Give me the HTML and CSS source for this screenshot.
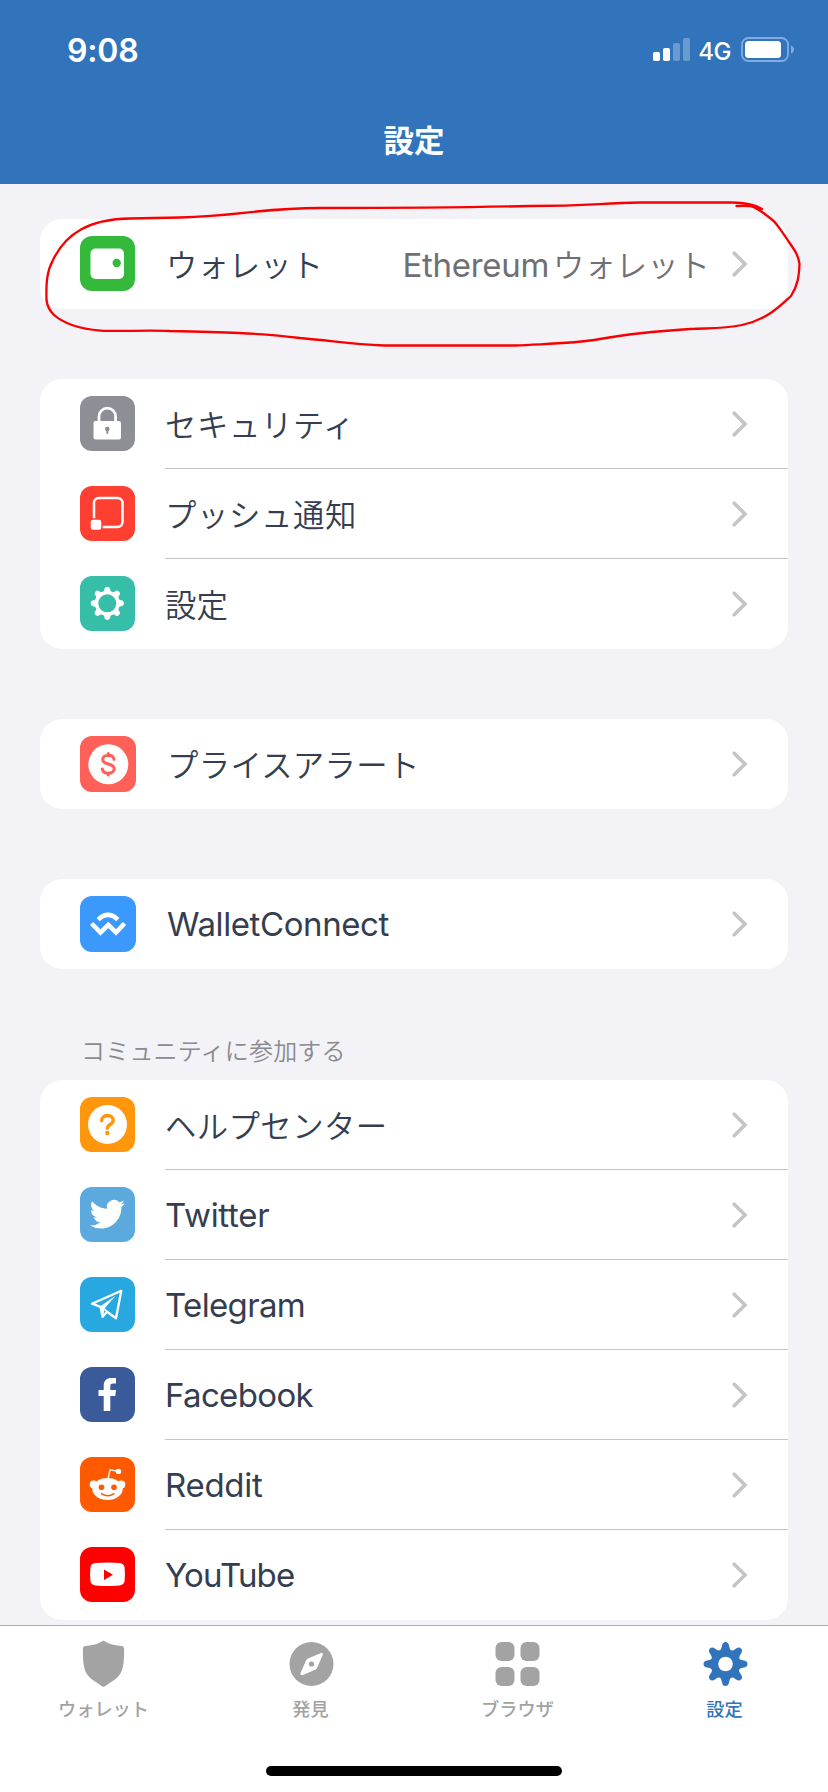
FILE: index.html
```html
<!DOCTYPE html>
<html lang="ja">
<head>
<meta charset="utf-8">
<title>設定</title>
<link rel="stylesheet" href="styles.css">
</head>
<body>
<svg class="defs" width="0" height="0" aria-hidden="true">
  <symbol id="chevron" viewBox="0 0 16 26"><path d="M2.2 2.2 L13 13 L2.2 23.8" fill="none" stroke="#c5c5c7" stroke-width="3.6" stroke-linecap="round" stroke-linejoin="miter"/></symbol>
</svg>
<div class="screen">
  <header class="header">
    <div class="status">
      <span class="time">9:08</span>
      <div class="status-right">
        <svg class="signal" width="38" height="24" viewBox="0 0 38 24"><g fill="#fff"><rect x="0" y="14" width="7" height="9" rx="1.7"/><rect x="10" y="10" width="7" height="13" rx="1.7"/><g opacity=".28"><rect x="20" y="5" width="7" height="18" rx="1.7"/><rect x="30" y="0" width="7" height="23" rx="1.7"/></g></g></svg>
        <span class="net">4G</span>
        <svg class="battery" width="54" height="26" viewBox="0 0 54 26"><rect x="1" y="1" width="46" height="23" rx="6.5" fill="none" stroke="#83ade0" stroke-width="1.8"/><rect x="4" y="4" width="36" height="17" rx="3.5" fill="#fff"/><path d="M50 8.5 C54 10 54 15 50 16.500Z" fill="#83ade0"/></svg>
      </div>
    </div>
    <h1 class="title">設定</h1>
  </header>

  <main class="content">
    <section class="card wallet-card">
      <div class="row">
        <svg class="icon" viewBox="0 0 55 55"><rect width="55" height="55" rx="12" fill="#34b93a"/><rect x="10.500" y="12.500" width="33.500" height="30.500" rx="5" fill="#fff"/><circle cx="36.700" cy="27" r="4.200" fill="#34b93a"/></svg>
        <div class="cell"><span class="label jp first">ウォレット</span><span class="value"><span class="en">Ethereum</span><span class="jp">ウォレット</span></span><svg class="chev"><use href="#chevron"/></svg></div>
      </div>
      <svg class="marker" width="828" height="176" viewBox="0 184 828 176"><path d="M736.500 206 C752 205 757 207 762 209 C752 203 742 202.500 732 202.500 L640 202.500 C600 203 590 206 530 206 C450 208 430 208 320 208 C260 208 240 216 180 217.500 L130 218.500 C90 219 66 233 53 260 C47 271 46 282 46.500 300 C48 312 56 319 72 325 C100 335 130 329 170 331 C220 332 260 333 300 338 C335 341 350 344 384 345.500 L515 345.500 C550 343.500 570 344 600 339 C628 334 660 331 690 329 C712 328 724 329 742 325 C768 319 780 306 791 296 C798 285 799 276 799.500 264 C798 252 791 246 785 236 C775 222 776 222 762 212 C753 205 748 205 736.500 206" fill="none" stroke="#f90000" stroke-width="2.300" stroke-linejoin="round" stroke-linecap="round"/></svg>
    </section>

    <section class="card">
      <div class="row">
        <svg class="icon" viewBox="0 0 55 55"><rect width="55" height="55" rx="12" fill="#8e8e96"/><rect x="13.500" y="25" width="27.500" height="18.500" rx="2" fill="#fff"/><path d="M19 26V20.500a8.300 8.300 0 0 1 16.600 0V26" fill="none" stroke="#fff" stroke-width="2.800"/><circle cx="27.300" cy="33" r="2.300" fill="#8e8e96"/><rect x="26.300" y="33" width="2" height="5" rx="1" fill="#8e8e96"/></svg>
        <div class="cell"><span class="label jp spaced">セキュリティ</span><svg class="chev"><use href="#chevron"/></svg></div>
      </div>
      <div class="row">
        <svg class="icon" viewBox="0 0 55 55"><rect width="55" height="55" rx="12" fill="#ff3f31"/><rect x="14" y="12" width="28.500" height="29" rx="5" fill="none" stroke="#fff" stroke-width="2.500"/><rect x="10" y="33" width="12" height="11.500" rx="3" fill="#fff" stroke="#ff3f31" stroke-width="1.500"/></svg>
        <div class="cell"><span class="label jp spaced">プッシュ通知</span><svg class="chev"><use href="#chevron"/></svg></div>
      </div>
      <div class="row">
        <svg class="icon" viewBox="0 0 55 55"><rect width="55" height="55" rx="12" fill="#36bea8"/><g transform="translate(27.300 27.300)"><g fill="#fff"><g id="teeth"><path d="M-4.200-11 Q-2.800-12.500-2.700-15 Q-2-16.600 0-16.600 Q2-16.600 2.700-15 Q2.800-12.500 4.200-11 V11 Q2.800 12.500 2.700 15 Q2 16.600 0 16.600 Q-2 16.600-2.700 15 Q-2.800 12.500-4.200 11Z"/></g><use href="#teeth" transform="rotate(45)"/><use href="#teeth" transform="rotate(90)"/><use href="#teeth" transform="rotate(135)"/><circle r="12.500"/></g><circle r="9" fill="#36bea8"/></g></svg>
        <div class="cell"><span class="label jp">設定</span><svg class="chev"><use href="#chevron"/></svg></div>
      </div>
    </section>

    <section class="card">
      <div class="row big">
        <svg class="icon" viewBox="0 0 56 56"><rect width="56" height="56" rx="12" fill="#ff6057"/><circle cx="28.300" cy="28.300" r="20" fill="#fff"/><path d="M34 23.300C33.500 20.500 31.300 19.300 28.300 19.300C24.900 19.300 22.700 21.100 22.700 23.700C22.700 29.500 34.200 26.500 34.200 32.700C34.200 35.600 31.700 37.300 28.300 37.300C25 37.300 22.800 35.800 22.300 33M28.300 17.500V19.500M28.300 37V39" fill="none" stroke="#ff6057" stroke-width="3.100" stroke-linecap="round"/></svg>
        <div class="cell"><span class="label jp wide">プライスアラート</span><svg class="chev"><use href="#chevron"/></svg></div>
      </div>
    </section>

    <section class="card">
      <div class="row big">
        <svg class="icon" viewBox="0 0 56 56"><rect width="56" height="56" rx="12" fill="#3b99fc"/><g fill="none" stroke="#fff" stroke-width="4.600"><path d="M18.200 23.600Q28 14.200 37.800 23.600"/><path d="M11.600 27.500L20.500 36.500L28.300 28.900L36 36.500L44.500 27.500"/></g></svg>
        <div class="cell"><span class="label en wc">WalletConnect</span><svg class="chev"><use href="#chevron"/></svg></div>
      </div>
    </section>

    <h2 class="section-title">コミュニティに参加する</h2>
    <section class="card">
      <div class="row">
        <svg class="icon" viewBox="0 0 55 55"><rect width="55" height="55" rx="12" fill="#ff960b"/><circle cx="27.500" cy="27.500" r="19.500" fill="#fff"/><path d="M21.700 23.700C21.700 20.500 24 18.500 27.300 18.500C30.800 18.500 33.200 20.500 33.200 23.500C33.200 27.500 27.300 27.500 27.300 31.300" fill="none" stroke="#ff960b" stroke-width="3.400" stroke-linecap="round"/><circle cx="27.300" cy="36" r="2.200" fill="#ff960b"/></svg>
        <div class="cell"><span class="label jp wider">ヘルプセンター</span><svg class="chev"><use href="#chevron"/></svg></div>
      </div>
      <div class="row">
        <svg class="icon" viewBox="0 0 55 55"><rect width="55" height="55" rx="12" fill="#5ba9dd"/><path transform="translate(9.700 9.600) scale(1.470)" fill="#fff" d="M23.950 4.570a10 10 0 0 1-2.820.770 4.960 4.960 0 0 0 2.160-2.720c-.95.550-2 .95-3.130 1.180a4.920 4.920 0 0 0-8.380 4.480C7.690 8.090 4.070 6.130 1.640 3.160a4.820 4.820 0 0 0-.67 2.480c0 1.710.87 3.210 2.190 4.100a4.900 4.900 0 0 1-2.230-.620v.060a4.920 4.920 0 0 0 3.950 4.830 5 5 0 0 1-2.210.080 4.940 4.940 0 0 0 4.600 3.420A9.870 9.870 0 0 1 0 19.540a14 14 0 0 0 7.550 2.210c9.050 0 14-7.500 14-13.980 0-.210 0-.420-.020-.630a9.940 9.940 0 0 0 2.420-2.570z"/></svg>
        <div class="cell"><span class="label en">Twitter</span><svg class="chev"><use href="#chevron"/></svg></div>
      </div>
      <div class="row">
        <svg class="icon" viewBox="0 0 55 55"><rect width="55" height="55" rx="12" fill="#28a8e0"/><path d="M41.300 13.800L12 26.700L20.500 29.800L22.600 39.800L27 34.800L36 41.300Z" fill="none" stroke="#fff" stroke-width="2.300" stroke-linejoin="round"/><path d="M20 29.500L35.500 18.800L24.500 31.500L23.500 38L22 39.500Z" fill="#fff"/><path d="M24.200 31.800L28 35.500" stroke="#fff" stroke-width="1.700"/></svg>
        <div class="cell"><span class="label en tight">Telegram</span><svg class="chev"><use href="#chevron"/></svg></div>
      </div>
      <div class="row">
        <svg class="icon" viewBox="0 0 55 55"><rect width="55" height="55" rx="12" fill="#3b5a9a"/><path d="M23.700 44V29H18.500V23H23.700V18.800C23.700 13.500 26.600 10.900 31.500 10.900H36V16.500H33C31 16.500 30.300 17.500 30.300 19.300V23H36L35.300 29H30.300V44Z" fill="#fff"/></svg>
        <div class="cell"><span class="label en tight">Facebook</span><svg class="chev"><use href="#chevron"/></svg></div>
      </div>
      <div class="row">
        <svg class="icon" viewBox="0 0 55 55"><rect width="55" height="55" rx="12" fill="#ff5a00"/><g fill="#fff"><ellipse cx="27.500" cy="32" rx="15.200" ry="11"/><circle cx="13.700" cy="27.500" r="4"/><circle cx="41.300" cy="27.500" r="4"/><circle cx="38.500" cy="14.400" r="2.700"/></g><path d="M28 22L30 12.800L37 14.200" fill="none" stroke="#fff" stroke-width="1.300"/><g fill="#ff5a00"><circle cx="21.500" cy="30.300" r="2.800"/><circle cx="34" cy="30.300" r="2.800"/></g><path d="M21.500 36.700Q27.700 40.800 34 36.700" fill="none" stroke="#ff5a00" stroke-width="1.500" stroke-linecap="round"/></svg>
        <div class="cell"><span class="label en">Reddit</span><svg class="chev"><use href="#chevron"/></svg></div>
      </div>
      <div class="row">
        <svg class="icon" viewBox="0 0 55 55"><rect width="55" height="55" rx="12" fill="#f00"/><path d="M15.500 15.900Q27.500 15 39.500 15.900Q44 16.300 44.600 20.500Q45.300 27.300 44.600 34Q44 38 39.500 38.400Q27.500 39.500 15.500 38.400Q11 38 10.400 34Q9.700 27.300 10.400 20.500Q11 16.300 15.500 15.900Z" fill="#fff"/><path d="M24 22.500V33L33 27.800Z" fill="#f00"/></svg>
        <div class="cell"><span class="label en tighter">YouTube</span><svg class="chev"><use href="#chevron"/></svg></div>
      </div>
    </section>
  </main>

  <nav class="tabbar">
    <div class="tabs">
      <div class="tab"><svg width="48" height="48" viewBox="0 0 48 48"><path d="M23.500 .800Q24.500 1 26.500 2.300C30.500 4.900 35.500 5.300 42 5.900Q44 6.200 44.100 8.500C44.200 24 43.200 31.500 37.500 37.200C33.500 41 27.500 44 25 46.200Q23.500 47.400 22 46.200C19.500 44 13.500 41 9.500 37.200C3.800 31.500 2.800 24 2.900 8.500Q3 6.200 5 5.900C11.500 5.300 16.500 4.900 20.500 2.300Q22.500 1 23.500 .800Z" fill="#a3a3a3"/></svg><span>ウォレット</span></div>
      <div class="tab"><svg width="48" height="48" viewBox="0 0 48 48"><circle cx="24.500" cy="24" r="22" fill="#a3a3a3"/><path d="M21 18.500L34 12.900Q36.500 12.600 35.700 15L30 28Q29.500 29 28.500 29.500L15.500 35.200Q13 35.300 13.500 33L19.300 20Q19.900 19 21 18.500Z" fill="#fff"/><circle cx="24.500" cy="24" r="2.600" fill="#a3a3a3"/></svg><span>発見</span></div>
      <div class="tab"><svg width="48" height="48" viewBox="0 0 48 48"><g fill="#a3a3a3"><rect x="1.500" y="2" width="19" height="19" rx="6"/><rect x="26.500" y="2" width="19" height="19" rx="6"/><rect x="1.500" y="27" width="19" height="19" rx="6"/><rect x="26.500" y="27" width="19" height="19" rx="6"/></g></svg><span>ブラウザ</span></div>
      <div class="tab active"><svg width="48" height="48" viewBox="0 0 48 48"><g transform="translate(24.500 24)" fill="#3174bb"><g id="cog"><path d="M-6-13Q-3.900-14.500-3.500-18.500Q-2.800-22 0-22Q2.800-22 3.500-18.500Q3.900-14.500 6-13V13Q3.900 14.500 3.500 18.500Q2.800 22 0 22Q-2.800 22-3.500 18.500Q-3.900 14.500-6 13Z"/></g><use href="#cog" transform="rotate(90)"/><use href="#cog" transform="rotate(45)"/><use href="#cog" transform="rotate(135)"/><circle r="14.800"/><circle r="7.300" fill="#fff"/></g></svg><span>設定</span></div>
    </div>
    <div class="home"></div>
  </nav>
</div>
</body>
</html>
```
FILE: styles.css
```css
* { box-sizing: border-box; }
body {
  margin: 0;
  font-family: Inter, "Noto Sans CJK JP", sans-serif;
  color: #353e50;
  background: #f2f2f7;
}
.defs { position: absolute; }
.screen {
  width: 828px;
  height: 1792px;
  display: flex;
  flex-direction: column;
  overflow: hidden;
}
.header {
  height: 184px;
  flex: none;
  background: #3174bb;
  color: #fff;
}
.status {
  height: 100px;
  padding: 0 33px 0 67px;
  display: flex;
  justify-content: space-between;
  align-items: center;
}
.time { font-size: 32px; font-weight: 600; letter-spacing: -0.2px; }
.status-right { display: flex; align-items: center; }
.net { font-size: 24px; font-weight: 500; letter-spacing: -0.5px; margin: 2px 10px 0 7px; }
.title {
  margin: 0;
  height: 81px;
  line-height: 81px;
  text-align: center;
  font-size: 30.5px;
  font-weight: 700;
}
.content {
  height: 1441px;
  flex: none;
  padding: 35px 40px 0;
}
.card {
  background: #fff;
  border-radius: 22px;
  margin-bottom: 70px;
}
.card:last-child { margin-bottom: 0; }
.wallet-card { position: relative; }
.marker {
  position: absolute;
  left: -40px;
  top: -35px;
  pointer-events: none;
}
.row {
  height: 90px;
  display: flex;
  align-items: center;
  padding-left: 40px;
  gap: 30px;
}
.icon { width: 55px; height: 55px; flex: none; margin-bottom: 1px; }
.big { gap: 29px; }
.big .icon { width: 56px; height: 56px; margin: 0; }
.cell {
  flex: 1;
  height: 90px;
  display: flex;
  align-items: center;
  padding-right: 40px;
  border-bottom: 1px solid #c6c6c8;
}
.row:last-child .cell,
.wallet-card .cell { border-bottom-color: transparent; }
.label { margin-right: auto; white-space: nowrap; }
.jp { font-size: 31.4px; font-weight: 350; }
.en { font-size: 33px; letter-spacing: -0.3px; }
.tight { letter-spacing: -0.65px; }
.tighter { letter-spacing: -0.85px; }
.spaced { letter-spacing: 0.6px; }
.first { padding-left: 1px; }
.wide { padding-left: 2px; letter-spacing: 0.3px; }
.wider { letter-spacing: 0.4px; }
.wc { padding-left: 2px; letter-spacing: -0.4px; }
.value { display: flex; align-items: baseline; gap: 4px; color: #6f6f74; margin-right: 22px; }
.chev { width: 16px; height: 26px; flex: none; }
.section-title {
  margin: 0;
  height: 41px;
  padding-left: 41px;
  font-size: 24px;
  line-height: 25px;
  letter-spacing: 0.2px;
  font-weight: 350;
  color: #8a8a90;
}
.tabbar {
  height: 167px;
  flex: none;
  background: #fff;
  border-top: 1px solid #a9a9b0;
  display: flex;
  flex-direction: column;
  align-items: center;
}
.tabs {
  width: 100%;
  display: grid;
  grid-template-columns: repeat(4, 1fr);
  padding-top: 14px;
}
.tab {
  display: flex;
  flex-direction: column;
  align-items: center;
  color: #a3a3a3;
  font-size: 18.2px;
  font-weight: 500;
  line-height: 26px;
  gap: 8px;
}
.active { color: #3174bb; }
.home {
  width: 296px;
  height: 10px;
  border-radius: 5px;
  background: #000;
  margin-top: 44px;
}
```
